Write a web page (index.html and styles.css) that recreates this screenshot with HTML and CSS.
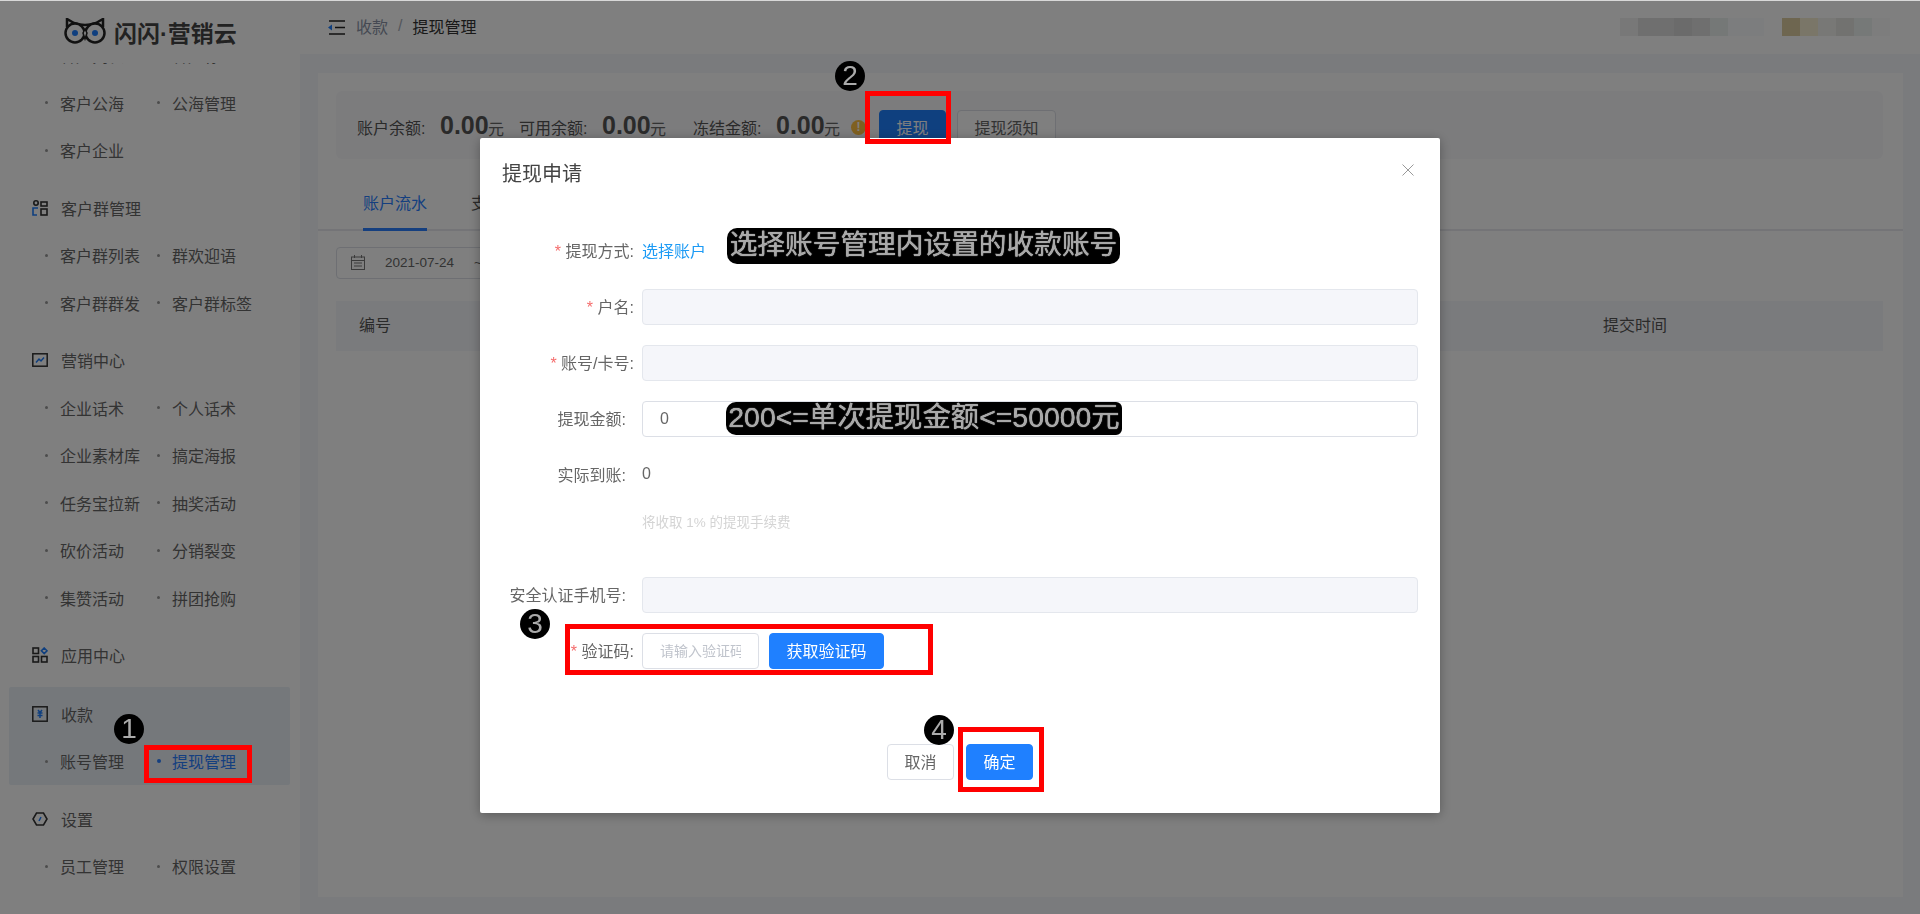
FILE: index.html
```html
<!DOCTYPE html>
<html lang="zh-CN">
<head>
    <meta charset="UTF-8">
    <title>提现管理</title>
    <link rel="stylesheet" href="styles.css">
</head>
<body>
    <div class="top-strip"></div>
    <div class="app">
        <aside class="sidebar">
            <div class="logo">
                <svg class="owl" width="42" height="27" viewBox="0 0 42 27">
                    <path d="M3 9 L3 1 L10 5 M39 9 L39 1 L32 5 M10 5 Q21 9 32 5" fill="none" stroke="#222" stroke-width="2.5"/>
                    <circle cx="11" cy="15" r="9.5" fill="#fff" stroke="#222" stroke-width="2.5"/>
                    <circle cx="31" cy="15" r="9.5" fill="#fff" stroke="#222" stroke-width="2.5"/>
                    <path d="M21 11 L19 15 L21 21 L23 15 Z" fill="#fff" stroke="#222" stroke-width="1.5"/>
                    <circle cx="11" cy="15" r="3" fill="#1f7fff"/>
                    <circle cx="31" cy="15" r="3" fill="#1f7fff"/>
                </svg>
                <span class="logo-text">闪闪·营销云</span>
            </div>
            <nav class="nav">
                <div class="nav-inner">
                    <div class="sub">
                        <a class="sub-item">客户列表</a>
                        <a class="sub-item">客户标签</a>
                        <a class="sub-item">客户公海</a>
                        <a class="sub-item">公海管理</a>
                        <a class="sub-item">客户企业</a>
                    </div>

                    <div class="group">
                        <div class="group-head">
                            <svg width="16" height="16" viewBox="0 0 16 16" fill="none" stroke-width="1.6">
                                <circle cx="4" cy="3" r="2.2" stroke="#333"/>
                                <path d="M6 8 H1 V15 H5" stroke="#1f7fff"/>
                                <rect x="9" y="2" width="6" height="4" stroke="#333"/>
                                <rect x="9" y="9" width="6" height="6" stroke="#333"/>
                            </svg>
                            客户群管理
                        </div>
                        <div class="sub">
                            <a class="sub-item">客户群列表</a>
                            <a class="sub-item">群欢迎语</a>
                            <a class="sub-item">客户群群发</a>
                            <a class="sub-item">客户群标签</a>
                        </div>
                    </div>

                    <div class="group">
                        <div class="group-head">
                            <svg width="16" height="14" viewBox="0 0 16 14" fill="none" stroke-width="1.5">
                                <rect x="0.8" y="0.8" width="14.4" height="12.4" stroke="#333"/>
                                <path d="M4 9.5 L7 6 L9 8 L12 4.5" stroke="#1f7fff"/>
                            </svg>
                            营销中心
                        </div>
                        <div class="sub">
                            <a class="sub-item">企业话术</a>
                            <a class="sub-item">个人话术</a>
                            <a class="sub-item">企业素材库</a>
                            <a class="sub-item">搞定海报</a>
                            <a class="sub-item">任务宝拉新</a>
                            <a class="sub-item">抽奖活动</a>
                            <a class="sub-item">砍价活动</a>
                            <a class="sub-item">分销裂变</a>
                            <a class="sub-item">集赞活动</a>
                            <a class="sub-item">拼团抢购</a>
                        </div>
                    </div>

                    <div class="group">
                        <div class="group-head">
                            <svg width="16" height="16" viewBox="0 0 16 16" fill="none" stroke-width="1.6">
                                <rect x="1" y="1" width="5.5" height="5.5" stroke="#333"/>
                                <rect x="1" y="9.5" width="5.5" height="5.5" stroke="#333"/>
                                <rect x="9.5" y="9.5" width="5.5" height="5.5" stroke="#333"/>
                                <path d="M12.2 1 L15 3.8 L12.2 6.6 L9.4 3.8 Z" stroke="#1f7fff"/>
                            </svg>
                            应用中心
                        </div>
                    </div>

                    <div class="group active">
                        <div class="group-head">
                            <svg width="16" height="16" viewBox="0 0 16 16" fill="none" stroke-width="1.5">
                                <rect x="0.8" y="0.8" width="14.4" height="14.4" stroke="#333"/>
                                <path d="M6 4 L8 6.5 L10 4 M5.5 7 H10.5 M5.5 9.5 H10.5 M8 6.5 V12" stroke="#1f7fff"/>
                            </svg>
                            收款
                        </div>
                        <div class="sub">
                            <a class="sub-item">账号管理</a>
                            <a class="sub-item current">提现管理</a>
                        </div>
                    </div>

                    <div class="group">
                        <div class="group-head">
                            <svg width="16" height="14" viewBox="0 0 16 14" fill="none" stroke-width="1.6">
                                <path d="M4.5 1 H11.5 L15 7 L11.5 13 H4.5 L1 7 Z" stroke="#333"/>
                                <path d="M7 9 L9 5" stroke="#1f7fff"/>
                            </svg>
                            设置
                        </div>
                        <div class="sub">
                            <a class="sub-item">员工管理</a>
                            <a class="sub-item">权限设置</a>
                        </div>
                    </div>
                </div>
            </nav>
        </aside>

        <main class="main">
            <header class="topbar">
                <svg class="fold-icon" width="17" height="15" viewBox="0 0 17 15" fill="none" stroke="#222" stroke-width="1.5">
                    <path d="M1 1 H17 M7 7.5 H17 M1 14 H17"/>
                    <path d="M0 7.5 L4 4.5 V10.5 Z" fill="#1f7fff" stroke="none"/>
                </svg>
                <span class="crumb">收款</span>
                <span class="crumb-sep">/</span>
                <span class="crumb-now">提现管理</span>
                <div class="blur-name"></div>
                <div class="blur-user"></div>
            </header>

            <section class="content">
                <div class="card">
                    <div class="balance">
                        <span class="bal-label">账户余额:</span>
                        <span class="bal-num">0.00</span>
                        <span class="bal-unit">元</span>
                        <span class="bal-label">可用余额:</span>
                        <span class="bal-num">0.00</span>
                        <span class="bal-unit wide">元</span>
                        <span class="bal-label">冻结金额:</span>
                        <span class="bal-num">0.00</span>
                        <span class="bal-unit">元</span>
                        <span class="warn-icon">!</span>
                        <button class="btn btn-primary btn-big">提现</button>
                        <button class="btn btn-big btn-notice">提现须知</button>
                    </div>

                    <div class="tabs">
                        <span class="tab on">账户流水</span>
                        <span class="tab">支付记录</span>
                    </div>

                    <div class="filter">
                        <div class="date-range">
                            <svg width="14" height="15" viewBox="0 0 14 15" fill="none" stroke="#777" stroke-width="1">
                                <rect x="0.5" y="2" width="13" height="12.5"/>
                                <path d="M0.5 5.5 H13.5 M3.5 0 V3 M10.5 0 V3 M3 8 H11 M3 11 H11"/>
                            </svg>
                            <span class="date-text">2021-07-24</span>
                            <span class="date-text">~</span>
                            <span class="date-text">2021-08-24</span>
                        </div>
                    </div>

                    <div class="table-head">
                        <span>编号</span>
                        <span>提交时间</span>
                    </div>
                </div>
            </section>
        </main>
    </div>

    <div class="overlay">
        <div class="modal">
            <div class="modal-head">
                <h2 class="modal-title">提现申请</h2>
                <svg class="modal-close" width="12" height="12" viewBox="0 0 12 12" stroke="#999" stroke-width="1">
                    <path d="M0.5 0.5 L11.5 11.5 M11.5 0.5 L0.5 11.5"/>
                </svg>
            </div>

            <form class="modal-form">
                <div class="row">
                    <label class="row-label"><i>*</i> 提现方式:</label>
                    <a class="pick-link">选择账户</a>
                </div>
                <div class="row">
                    <label class="row-label"><i>*</i> 户名:</label>
                    <input class="field" type="text" disabled>
                </div>
                <div class="row">
                    <label class="row-label"><i>*</i> 账号/卡号:</label>
                    <input class="field" type="text" disabled>
                </div>
                <div class="row">
                    <label class="row-label plain">提现金额:</label>
                    <input class="field" type="text" value="0">
                </div>
                <div class="row">
                    <label class="row-label plain">实际到账:</label>
                    <span class="row-value">0</span>
                </div>
                <div class="row-hint">将收取 1% 的提现手续费</div>
                <div class="row">
                    <label class="row-label plain">安全认证手机号:</label>
                    <input class="field" type="text" disabled>
                </div>
                <div class="row">
                    <label class="row-label"><i>*</i> 验证码:</label>
                    <input class="field code" type="text" placeholder="请输入验证码">
                    <button class="btn btn-primary btn-code" type="button">获取验证码</button>
                </div>
            </form>

            <div class="modal-foot">
                <button class="btn btn-foot" type="button">取消</button>
                <button class="btn btn-primary btn-foot" type="button">确定</button>
            </div>
        </div>
    </div>

    <!-- marks drawn on the screenshot -->
    <div class="note note-account">选择账号管理内设置的收款账号</div>
    <div class="note note-amount">200&lt;=单次提现金额&lt;=50000元</div>

    <div class="redbox box-menu"></div>
    <div class="redbox box-withdraw"></div>
    <div class="redbox box-code"></div>
    <div class="redbox box-ok"></div>

    <span class="step step-1">1</span>
    <span class="step step-2">2</span>
    <span class="step step-3">3</span>
    <span class="step step-4">4</span>
</body>
</html>
```

FILE: styles.css
```css
* {
    box-sizing: border-box;
}

html, body {
    margin: 0;
    height: 914px;
    overflow: hidden;
}

body {
    font-family: "Liberation Sans", "Noto Sans CJK SC", sans-serif;
    font-size: 16px;
    color: #555;
    background: #fff;
}

.top-strip {
    position: absolute;
    top: 0;
    left: 0;
    right: 0;
    height: 1px;
    background: #d8d8d8;
    z-index: 20;
}

.app {
    display: flex;
    height: 914px;
}

/* sidebar */
.sidebar {
    width: 300px;
    flex-shrink: 0;
    background: #fff;
    display: flex;
    flex-direction: column;
}

.logo {
    height: 62.5px;
    padding: 1px 0 0 64px;
    display: flex;
    align-items: center;
    gap: 8px;
    flex-shrink: 0;
}

.logo-text {
    font-size: 23px;
    font-weight: 700;
    color: #444;
    white-space: nowrap;
}

.nav {
    flex: 1;
    overflow: hidden;
}

.nav-inner {
    margin-top: -31px;
}

.group {
    margin-top: 10px;
}

.group-head {
    height: 47.5px;
    padding-left: 32px;
    display: flex;
    align-items: center;
    gap: 13px;
    color: #666;
}

.group-head svg {
    flex-shrink: 0;
}

.sub {
    display: grid;
    grid-template-columns: 112px 112px;
    padding-left: 45px;
}

.sub-item {
    height: 47.5px;
    display: flex;
    align-items: center;
    gap: 12px;
    color: #666;
    white-space: nowrap;
}

.sub-item::before {
    content: "";
    width: 3px;
    height: 3px;
    border-radius: 50%;
    background: #999;
    flex-shrink: 0;
}

.sub-item.current {
    color: #2a7fff;
}

.sub-item.current::before {
    background: #2a7fff;
    width: 4px;
    height: 4px;
    margin-right: -1px;
}

.group.active {
    margin: 8px 10px 0 9px;
    padding-top: 3px;
    background: #eaf0f7;
    border-radius: 2px;
}

.group.active .group-head {
    padding-left: 23px;
}

.group.active .sub {
    padding-left: 36px;
}

.group.active + .group {
    margin-top: 10px;
}

/* main */
.main {
    flex: 1;
    min-width: 0;
    background: #f5f6fa;
    display: flex;
    flex-direction: column;
}

.topbar {
    height: 54px;
    background: #fff;
    padding-left: 28px;
    display: flex;
    align-items: center;
    flex-shrink: 0;
}

.fold-icon {
    margin-right: 11px;
}

.crumb {
    color: #8a93a6;
    padding-bottom: 2px;
}

.crumb-sep {
    color: #a8adb8;
    margin: 0 10px;
    padding-bottom: 2px;
}

.crumb-now {
    color: #333;
    padding-bottom: 2px;
}

.blur-name {
    margin-left: auto;
    width: 144px;
    height: 18px;
    background: linear-gradient(to right, #f0f0f0 0 18px, #dedede 18px 54px, #d6d6d6 54px 72px, #dedede 72px 90px, #eaf0ee 90px 108px, #f8fafc 108px);
}

.blur-user {
    margin: 0 30px 0 18px;
    width: 108px;
    height: 18px;
    background: linear-gradient(to right, #dcccA0 0 18px, #f4ecd0 18px 36px, #f0f0ec 36px 54px, #e4e4e0 54px 72px, #ecf2f0 72px 90px, #fafafa 90px);
}

.content {
    flex: 1;
    padding: 19px 17px 17px 18px;
    min-height: 0;
}

.card {
    height: 100%;
    background: #fff;
    padding-top: 18px;
}

.balance {
    height: 68px;
    margin: 0 20px 0 18px;
    padding-left: 21px;
    background: #f9f9fb;
    border-radius: 6px;
    display: flex;
    align-items: center;
}

.bal-label {
    width: 83px;
    padding-top: 3px;
    color: #555;
}

.bal-num {
    width: 48px;
    font-size: 25px;
    font-weight: 700;
    color: #555;
}

.bal-unit {
    width: 31px;
    padding-top: 6px;
    color: #666;
}

.bal-unit.wide {
    width: 43px;
}

.warn-icon {
    width: 15px;
    height: 15px;
    margin: 4px 13px 0 -4px;
    border-radius: 50%;
    background: #ffc040;
    color: #fff;
    font-size: 12px;
    font-weight: 700;
    line-height: 15px;
    text-align: center;
}

.btn {
    font-family: inherit;
    border: 1px solid #dcdfe6;
    border-radius: 4px;
    background: #fff;
    color: #666;
    cursor: pointer;
    padding: 0 0 2px;
}

.btn-primary {
    background: #1f80ff;
    border-color: #1f80ff;
    color: #fff;
}

.btn-big {
    width: 67px;
    height: 36px;
    margin-top: 6px;
    font-size: 16px;
}

.btn-notice {
    width: 99px;
    margin-left: 11px;
}

.tabs {
    height: 72px;
    padding-left: 45px;
    border-bottom: 2px solid #e8e9ee;
    display: flex;
    align-items: flex-end;
    gap: 44px;
}

.tab {
    height: 46px;
    padding-top: 5px;
    color: #555;
    border-bottom: 3px solid transparent;
    margin-bottom: -2px;
    white-space: nowrap;
}

.tab.on {
    color: #2a7fff;
    border-bottom-color: #2a7fff;
}

.filter {
    padding: 16px 18px 22px;
}

.date-range {
    width: 420px;
    height: 32px;
    padding: 0 0 1px 14px;
    border: 1px solid #dcdfe6;
    border-radius: 4px;
    display: flex;
    align-items: center;
    gap: 20px;
}

.date-text {
    font-size: 13.5px;
    color: #666;
}

.table-head {
    height: 50px;
    margin: 0 20px 0 18px;
    padding: 0 216px 4px 23px;
    background: #f5f6fa;
    color: #555;
    display: flex;
    align-items: center;
    justify-content: space-between;
}

/* dialog */
.overlay {
    position: fixed;
    inset: 0;
    background: rgba(0, 0, 0, 0.5);
    z-index: 10;
}

.modal {
    width: 960px;
    height: 675px;
    margin: 138px auto 0;
    background: #fff;
    border-radius: 2px;
    box-shadow: 0 2px 12px rgba(0, 0, 0, 0.3);
}

.modal-head {
    height: 95px;
    padding: 22px 22px 0;
    display: flex;
    justify-content: space-between;
    align-items: flex-start;
}

.modal-title {
    margin: 0;
    font-size: 20px;
    font-weight: 400;
    line-height: 28px;
    color: #444;
}

.modal-close {
    margin: 4px 4px 0 0;
}

.modal-form {
    display: flex;
    flex-direction: column;
    gap: 20px;
    padding-right: 22px;
}

.row {
    height: 36px;
    display: flex;
    align-items: center;
    font-size: 16px;
}

.row-label {
    width: 162px;
    padding: 0 8px 3px 0;
    text-align: right;
    color: #666;
    flex-shrink: 0;
    white-space: nowrap;
}

.row-label.plain {
    padding-right: 16px;
}

.row-label i {
    font-style: normal;
    color: #f56c6c;
}

.pick-link {
    color: #1d9bf5;
    padding-bottom: 3px;
}

.field {
    flex: 1;
    min-width: 0;
    height: 36px;
    padding: 0 17px;
    border: 1px solid #dcdfe6;
    border-radius: 4px;
    font-family: inherit;
    font-size: 16px;
    color: #666;
    background: #fff;
}

.field:disabled {
    background: #f5f6fa;
    border-color: #e4e7ed;
}

.field::placeholder {
    color: #c0c4cc;
}

.field.code {
    flex: none;
    width: 117px;
    font-size: 14px;
}

.row-value {
    color: #666;
    padding-bottom: 2px;
}

.btn-code {
    width: 115px;
    height: 36px;
    margin-left: 10px;
    font-size: 16px;
}

.row-hint {
    height: 20px;
    margin: 0 0 24px 162px;
    font-size: 13.5px;
    line-height: 20px;
    color: #d4d4d4;
}

.modal-foot {
    margin-top: 75px;
    display: flex;
    justify-content: center;
    gap: 12px;
}

.btn-foot {
    width: 67px;
    height: 36px;
    font-size: 16px;
}

/* marks on top of the screenshot */
.note {
    position: absolute;
    z-index: 30;
    background: #000;
    color: #a8a8a8;
    white-space: nowrap;
    text-align: center;
    text-shadow: 0 0 1px #fff;
}

.note-account {
    left: 727px;
    top: 228px;
    width: 393px;
    height: 36px;
    font-size: 27.7px;
    line-height: 34px;
    border-radius: 10px;
}

.note-amount {
    left: 726px;
    top: 402px;
    width: 396px;
    height: 33px;
    font-size: 28.4px;
    line-height: 31px;
    border-radius: 10px 6px 6px 10px;
}

.redbox {
    position: absolute;
    z-index: 30;
    border: 5px solid #f00;
}

.box-menu {
    left: 144px;
    top: 745px;
    width: 108px;
    height: 38px;
}

.box-withdraw {
    left: 865px;
    top: 91px;
    width: 86px;
    height: 53px;
}

.box-code {
    left: 565px;
    top: 624px;
    width: 368px;
    height: 51px;
}

.box-ok {
    left: 958px;
    top: 727px;
    width: 86px;
    height: 65px;
}

.step {
    position: absolute;
    z-index: 30;
    width: 30px;
    height: 30px;
    border-radius: 50%;
    background: #000;
    color: #aaa;
    font-size: 28px;
    line-height: 30px;
    text-align: center;
}

.step-1 {
    left: 114px;
    top: 714px;
}

.step-2 {
    left: 835px;
    top: 61px;
}

.step-3 {
    left: 520px;
    top: 609px;
}

.step-4 {
    left: 924px;
    top: 715px;
}
```
